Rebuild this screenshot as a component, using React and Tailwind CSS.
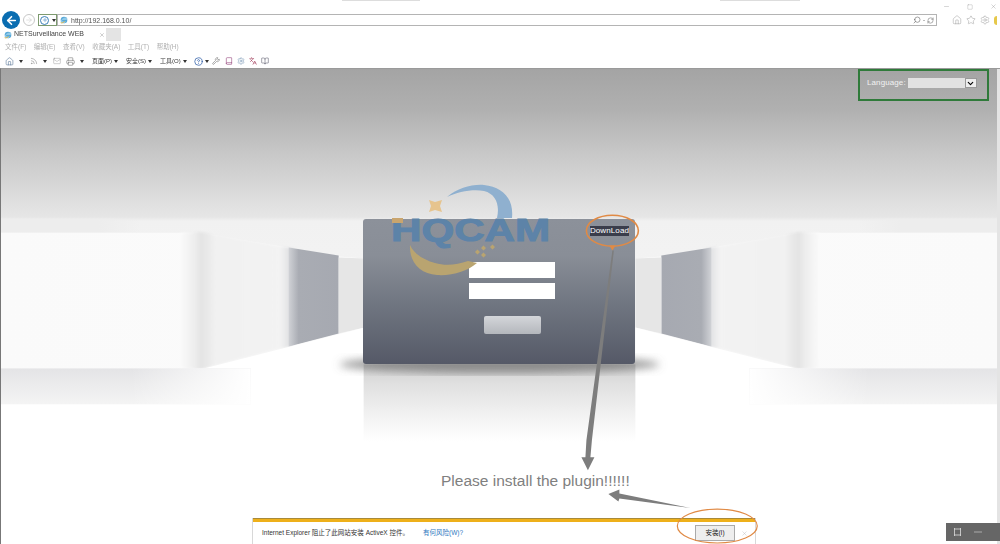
import React from "react";
import { Home, Rss, Mail, Printer, CircleHelp, Wrench, Settings, Search, RefreshCw, Star, Minus, Square, X, ChevronDown, Plus, ArrowRight, ArrowLeft, Book, BookOpen, Languages } from "lucide-react";

const FONT = "font-['Liberation_Sans','Noto_Sans_CJK_SC',sans-serif]";

function Caret() {
  return <span className="ml-[2px] inline-block h-0 w-0 border-x-[2.5px] border-t-[3px] border-x-transparent border-t-[#333]" />;
}

function IeLogo({ size = 9 }) {
  return (
    <svg width={size} height={size} viewBox="0 0 12 12" className="shrink-0">
      <circle cx="6" cy="6" r="5" fill="#57a8d8" />
      <path d="M1 8 C3 2 9 1 11 3 L10 6 L3 6 C3 8 6 9 9 8 L7 11 C4 11 2 10 1 8Z" fill="#8fc9e8" />
      <path d="M1 10 C3 11 5 10 7 8" stroke="#e2b43c" strokeWidth="1.4" fill="none" />
    </svg>
  );
}

function Chrome() {
  return (
    <div className="relative flex h-[68px] shrink-0 flex-col bg-white blur-[0.35px]">
      <div className="absolute left-[342px] top-0 h-[1px] w-[78px] bg-[#dddddd]" />
      <div className="absolute left-[720px] top-0 h-[1px] w-[80px] bg-[#dddddd]" />
      <div className="flex h-[13px] shrink-0 items-center justify-end gap-[17px] pr-[3px] text-[#8a8a8a]">
        <Minus size={7} strokeWidth={1.2} />
        <Square size={6} strokeWidth={1.2} />
        <X size={7} strokeWidth={1.2} />
      </div>
      <div className="flex h-[14px] shrink-0 items-center pl-[2px] pr-[3px]">
        <div className="flex h-[18px] w-[18px] shrink-0 items-center justify-center rounded-full bg-[#0a6db1] text-white">
          <ArrowLeft size={13} strokeWidth={3} />
        </div>
        <div className="ml-[3px] flex h-[12px] w-[12px] shrink-0 items-center justify-center rounded-full border border-[#c8c8c8] text-[#c8c8c8]">
          <ArrowRight size={8} strokeWidth={1.6} />
        </div>
        <div className="ml-[3px] flex h-[12px] w-[19px] shrink-0 items-center gap-[1px] border border-[#7d9a6f] pl-[1px]">
          <div className="flex h-[9px] w-[9px] items-center justify-center rounded-full border border-[#3a7fb8] text-[#3a7fb8]"><Plus size={6} strokeWidth={2} /></div>
          <Caret />
        </div>
        <div className={`flex h-[12px] w-[880px] shrink-0 items-center border border-[#b4b4b4] pl-[2px] text-[7px] leading-none text-[#555] ${FONT}`}>
          <IeLogo size={8} />
          <span className="ml-[3px]">http://192.168.0.10/</span>
          <div className="ml-auto flex items-center gap-[2px] pr-[2px] text-[#555]">
            <Search size={8} strokeWidth={1.6} className="-scale-x-100" />
            <span className="text-[6px]">-</span>
            <RefreshCw size={7} strokeWidth={1.6} />
          </div>
        </div>
        <div className="ml-auto flex items-center gap-[4px] text-[#9a9a9a]">
          <Home size={10} strokeWidth={1.2} />
          <Star size={10} strokeWidth={1.2} />
          <Settings size={10} strokeWidth={1.2} />
          <div className="h-[9px] w-[3px] rounded-l-full bg-[#e6c84a]" />
        </div>
      </div>
      <div className={`mt-[1px] flex h-[13px] shrink-0 items-stretch pl-[1px] text-[7px] text-[#444] ${FONT}`}>
        <div className="flex w-[105px] items-center gap-[2px] pl-[3px]">
          <IeLogo size={8} />
          <span>NETSurveillance WEB</span>
          <X size={6} strokeWidth={1.4} className="ml-auto mr-[1px] text-[#777]" />
        </div>
        <div className="w-[15px] bg-[#e4e4e4]" />
      </div>
      <div className={`flex h-[13px] shrink-0 items-center gap-[7.5px] pl-[5px] text-[6.5px] leading-none text-[#b0b0b0] ${FONT}`}>
        <span>文件(F)</span><span>编辑(E)</span><span>查看(V)</span><span>收藏夹(A)</span><span>工具(T)</span><span>帮助(H)</span>
      </div>
      <div className={`flex h-[14px] shrink-0 items-center pl-[5px] text-[6px] leading-none text-[#333] ${FONT}`}>
        <Home size={9} strokeWidth={1.4} className="text-[#47688c]" /><span className="ml-[3px]"><Caret /></span>
        <Rss size={8} strokeWidth={1.5} className="ml-[7px] text-[#777]" /><span className="ml-[3px]"><Caret /></span>
        <Mail size={8} strokeWidth={1.2} className="ml-[6px] text-[#888]" />
        <Printer size={9} strokeWidth={1.4} className="ml-[5px] text-[#666]" /><span className="ml-[3px]"><Caret /></span>
        <span className="ml-[8px]">页面(P)</span><Caret />
        <span className="ml-[8px]">安全(S)</span><Caret />
        <span className="ml-[8px]">工具(O)</span><Caret />
        <CircleHelp size={9} strokeWidth={2} className="ml-[7px] text-[#2f5ea8]" /><Caret />
        <Wrench size={8} strokeWidth={1.6} className="ml-[3px] text-[#666]" />
        <Book size={8} strokeWidth={1.6} className="ml-[5px] text-[#8a2f6d]" />
        <Settings size={8} strokeWidth={1.6} className="ml-[4px] text-[#6f8fb0]" />
        <Languages size={8} strokeWidth={1.6} className="ml-[4px] text-[#9a3050]" />
        <BookOpen size={8} strokeWidth={1.6} className="ml-[4px] text-[#556]" />
      </div>
    </div>
  );
}

function Corridor() {
  return (
    <svg className="absolute inset-0 h-full w-full" viewBox="0 68 1000 476" preserveAspectRatio="none">
      <defs>
        <filter id="soft"><feGaussianBlur stdDeviation="0.8" /></filter>
        <filter id="softer"><feGaussianBlur stdDeviation="4" /></filter>
        <linearGradient id="floor" x1="0" y1="0" x2="0" y2="1">
          <stop offset="0" stopColor="#e4e4e6" />
          <stop offset="1" stopColor="#f4f4f4" />
        </linearGradient>
        <linearGradient id="floorfade" x1="0" y1="0" x2="1" y2="0">
          <stop offset="0" stopColor="#ffffff" stopOpacity="0" />
          <stop offset="1" stopColor="#ffffff" stopOpacity="1" />
        </linearGradient>
        <linearGradient id="band" x1="0" y1="0" x2="1" y2="0">
          <stop offset="0.7" stopColor="#ededed" />
          <stop offset="1" stopColor="#ededed" stopOpacity="0" />
        </linearGradient>
        <linearGradient id="wa" x1="0" y1="0" x2="1" y2="0">
          <stop offset="0" stopColor="#fafafa" />
          <stop offset="1" stopColor="#fbfbfb" />
        </linearGradient>
        <linearGradient id="wb" x1="0" y1="0" x2="1" y2="0">
          <stop offset="0" stopColor="#fafafa" />
          <stop offset="0.12" stopColor="#eeeeee" />
          <stop offset="0.18" stopColor="#e4e4e4" />
          <stop offset="0.24" stopColor="#e9e9e9" />
          <stop offset="0.3" stopColor="#f1f1f1" />
          <stop offset="0.88" stopColor="#f3f3f3" />
          <stop offset="1" stopColor="#d8d9dc" />
        </linearGradient>
        <linearGradient id="wc" x1="0" y1="0" x2="1" y2="0">
          <stop offset="0" stopColor="#d0d2d6" />
          <stop offset="0.2" stopColor="#a9acb3" />
          <stop offset="1" stopColor="#a6a9b1" />
        </linearGradient>
        <linearGradient id="refl" x1="0" y1="0" x2="0" y2="1">
          <stop offset="0" stopColor="#cfcfcf" />
          <stop offset="0.25" stopColor="#e0e0e0" />
          <stop offset="0.7" stopColor="#f4f4f4" />
          <stop offset="1" stopColor="#ffffff" />
        </linearGradient>
        <g id="side">
          <rect x="0" y="218" width="140" height="14" fill="url(#band)" />
          <polygon points="0,232 182,232 200,232 293,248 338,256 364,258 364,327 338,333 293,345 200,369 0,368" fill="url(#wa)" />
          <polygon points="180,232 200,231 293,248 293,345 200,369 180,368" fill="url(#wb)" filter="url(#soft)" />
          <polygon points="288,247 338,255 338,333 288,346" fill="url(#wc)" />
          <polygon points="338,257 364,258 364,327 338,333" fill="#e6e6e6" />
          <polygon points="200,369 364,327 364,369" fill="#ffffff" />
          <rect x="0" y="368" width="364" height="37" fill="#ffffff" />
          <rect x="0" y="368" width="250" height="36" fill="url(#floor)" />
          <rect x="130" y="368" width="120" height="36" fill="url(#floorfade)" />
        </g>
      </defs>
      <use href="#side" />
      <use href="#side" transform="translate(999,0) scale(-1,1)" />
      <rect x="363" y="364" width="272" height="78" fill="url(#refl)" />
      <ellipse cx="499" cy="364" rx="160" ry="9" fill="#6e6e6e" fillOpacity="0.7" filter="url(#softer)" />
    </svg>
  );
}

function Logo() {
  return (
    <svg className="absolute left-[20px] top-[-40px] overflow-visible" width="170" height="100" viewBox="383 179 170 100">
      <path d="M447 197 C458 188 472 184 484 185 C502 187 514 198 512 218 L497 218 C500 205 496 194 484 191 C472 189 458 192 447 197Z" fill="#8fb0cf" />
      <path d="M429 200 L435 202 L442 200 L440 206 L442 212 L435 210 L429 212 L431 206Z" fill="#e6c48e" />
      <path d="M410 245 C409 262 420 274 437 275 C452 276 468 271 477 263 L468 261 C457 265 445 266 435 263 C424 260 414 254 410 245Z" fill="#b9a470" />
      <path d="M481 248 l2.5 -2.5 l2.5 2.5 l-2.5 2.5Z M490 247 l2.5 -2.5 l2.5 2.5 l-2.5 2.5Z M481 255 l2.5 -2.5 l2.5 2.5 l-2.5 2.5Z M475 252 l2.5 -2.5 l2.5 2.5 l-2.5 2.5Z" fill="#b9a470" />
      <text x="391" y="241" textLength="159" lengthAdjust="spacingAndGlyphs" fontFamily="'Liberation Sans',sans-serif" fontWeight="700" fontSize="31" fill="#5d83a8" stroke="#5d83a8" strokeWidth="1">HQCAM</text>
      <rect x="392" y="218" width="11" height="5" fill="#c9a56e" />
    </svg>
  );
}

function LoginCard() {
  return (
    <div className={`relative ml-[362px] mt-[150px] flex h-[145px] w-[272px] flex-col items-center rounded-[3px] bg-[linear-gradient(180deg,#8c919a_0%,#898e97_25%,#6f7580_60%,#555967_100%)] pl-[26px] pt-[43px] ${FONT}`}>
      <div className="h-[16px] w-[86px] bg-white" />
      <div className="mt-[5px] h-[16px] w-[86px] bg-white" />
      <div className="mt-[17px] h-[18px] w-[57px] rounded-[2px] bg-[linear-gradient(180deg,#d4d6da,#b4b7bc)]" />
      <Logo />
      <div className="absolute right-[6px] top-[7px] bg-[#3a3d4b] text-[8px] leading-[10px] tracking-[0.1px] text-white">DownLoad</div>
    </div>
  );
}

function Annotations() {
  return (
    <svg className="pointer-events-none absolute inset-0 h-full w-full" viewBox="0 68 1000 476" preserveAspectRatio="none">
      <ellipse cx="612" cy="230" rx="26" ry="15.5" fill="none" stroke="#e08a45" strokeWidth="1.6" />
      <polygon points="609,245 615,245 612,250" fill="#e08a45" />
      <polygon points="612,250 613.5,250 591.5,440 590,457 594,457 587.5,470 581,457 585,457 586,440" fill="#7d7d7d" />
      <polygon points="608,494 619,489.5 619,493.5 690,508 619,498.5 618,501.5" fill="#7d7d7d" />
      <ellipse cx="717" cy="526" rx="40" ry="17" fill="none" stroke="#e08a45" strokeWidth="1.2" />
    </svg>
  );
}

export default function App() {
  return (
    <div className={`flex h-[544px] w-[1000px] flex-col overflow-hidden bg-white ${FONT}`}>
      <Chrome />
      <div className="relative flex-1 overflow-hidden border-l border-[#777777] border-t border-t-[#9a9a9a] bg-[linear-gradient(180deg,#a4a4a4_0px,#b0b0b0_40px,#c8c8c8_85px,#e0e0e0_135px,#e6e6e6_148px,#f1f1f1_152px,#f6f6f6_300px,#ffffff_301px)]">
        <Corridor />
        <div className="relative flex h-full flex-col">
          <LoginCard />
        </div>
        <div className="absolute right-0 top-0 h-full w-[3px] bg-[#e4e4e4]" />
        <div className="absolute right-[11px] top-0 flex h-[32px] w-[131px] items-center border-2 border-[#2f7a3a] pb-[4px] pl-[7px] text-[8px] tracking-[0.1px] text-[#f2f2f2]">
          <span>Language:</span>
          <div className="ml-[2px] h-[10px] w-[57px] bg-[#e2e2e2]" />
          <div className="flex h-[10px] w-[12px] items-center justify-center border border-[#999] bg-[#eee] text-black"><ChevronDown size={9} strokeWidth={3} /></div>
        </div>
        <div className="absolute left-[440px] top-[402px] text-[15.5px] leading-[20px] text-[#808080]">Please install the plugin!!!!!!</div>
        <div className="absolute bottom-0 left-[251px] h-[26px] w-[504px] border-x border-[#d8d8d8] bg-white">
          <div className="h-[4px] border-t border-[#a88a3a] bg-[#eeb01a]" />
          <div className="flex h-[22px] items-center pl-[9px] pr-[7px] text-[6.5px] text-[#333]">
            <span>Internet Explorer 阻止了此网站安装 ActiveX 控件。</span>
            <span className="ml-[14px] text-[#2f78c0]">有何风险(W)?</span>
            <div className="ml-auto flex h-[16px] w-[40px] items-center justify-center border border-[#aaa] bg-[#eeeeee] text-[6.5px] text-[#222]">安装(I)</div>
            <X size={7} strokeWidth={1.2} className="ml-[6px] text-[#aaa]" />
          </div>
        </div>
        <div className="absolute bottom-[3px] right-0 flex h-[18px] w-[54px] items-center gap-[12px] bg-[#666] pl-[7px]">
          <svg width="9" height="8" viewBox="0 0 9 8" fill="none" stroke="#ddd" strokeWidth="0.8"><path d="M1 1h7M1 7h7M1.5 0v8M7.5 0v8" /></svg>
          <div className="h-[2px] w-[8px] bg-[#888]" />
        </div>
        <Annotations />
      </div>
    </div>
  );
}
